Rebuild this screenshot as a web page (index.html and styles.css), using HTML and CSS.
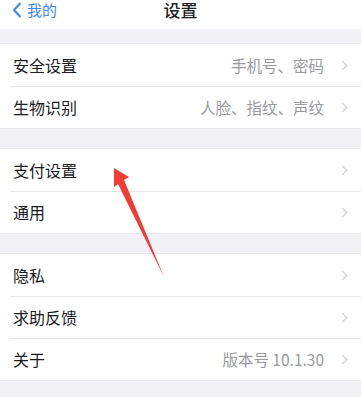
FILE: index.html
```html
<!DOCTYPE html>
<html lang="zh-CN">
<head>
  <meta charset="UTF-8">
  <title>设置</title>
  <meta name="viewport" content="width=device-width, initial-scale=1.0" />
  <link rel="stylesheet" href="styles.css">
</head>
<body>
  <div class="page">
    <header class="nav">
      <a class="back">
        <svg width="10" height="16" viewBox="0 0 10 16"><path d="M8 1.5 L2 8 L8 14.5" fill="none" stroke="#3a87f5" stroke-width="2" stroke-linecap="round" stroke-linejoin="round"/></svg>
        我的
      </a>
      <h1>设置</h1>
    </header>

    <div class="group first">
      <div class="row"><span class="label">安全设置</span><span class="value">手机号、密码</span><i class="chev"></i></div>
      <div class="row"><span class="label">生物识别</span><span class="value">人脸、指纹、声纹</span><i class="chev"></i></div>
    </div>

    <div class="group">
      <div class="row"><span class="label">支付设置</span><span class="value"></span><i class="chev"></i></div>
      <div class="row"><span class="label">通用</span><span class="value"></span><i class="chev"></i></div>
    </div>

    <div class="group">
      <div class="row"><span class="label">隐私</span><span class="value"></span><i class="chev"></i></div>
      <div class="row"><span class="label">求助反馈</span><span class="value"></span><i class="chev"></i></div>
      <div class="row"><span class="label">关于</span><span class="value">版本号 10.1.30</span><i class="chev"></i></div>
    </div>

    <!-- annotation arrow -->
    <svg class="arrow" width="361" height="397" viewBox="0 0 361 397">
      <polygon points="114,168 129,177 124,180 164,277 118,184 114,187" fill="#f23b35"/>
    </svg>
  </div>
</body>
</html>
```

FILE: styles.css
```css
body { margin: 0; background: #f2f2f6; font-family: "Noto Sans CJK SC", "Noto Sans", sans-serif; color: #1c1c1e; }
.page { position: relative; width: 361px; height: 397px; overflow: hidden; }
.nav { height: 29px; background: #fff; position: relative; }
.nav h1 { margin: 0; text-align: center; font-size: 17px; font-weight: 500; line-height: 20px; color: #222; }
.back { position: absolute; left: 12px; top: 0; display: flex; align-items: center; gap: 5px; color: #3a87f5; font-size: 15px; line-height: 20px; }
.back svg { display: block; }
.group { background: #fff; margin-top: 21px; box-shadow: 0 -1px 0 #e8e8ec, 0 1px 0 #e8e8ec; }
.group.first { margin-top: 15px; }
.row { height: 42px; display: flex; align-items: center; padding: 0 13px; position: relative; }
.row + .row::before { content: ""; position: absolute; left: 10px; right: 0; top: 0; border-top: 1px solid #e6e6ea; }
.label { font-size: 16px; flex: 1; color: #1c1c1e; }
.value { font-size: 15.5px; color: #9a9a9e; margin-right: 15px; }
.chev { width: 6px; height: 6px; border-top: 1.3px solid #c7c7cc; border-right: 1.3px solid #c7c7cc; transform: rotate(45deg); margin-right: 2px; }
.arrow { position: absolute; left: 0; top: 0; pointer-events: none; }
```
